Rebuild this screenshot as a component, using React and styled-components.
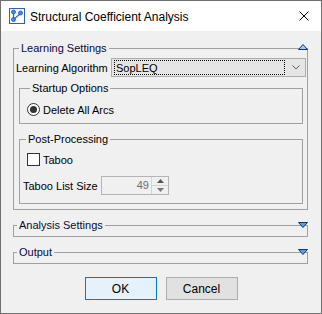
import React from "react";
import styled, { createGlobalStyle } from "styled-components";

const Global = createGlobalStyle`
  body {
    margin: 0;
    background: #ffffff;
    font-family: "Liberation Sans", Arial, sans-serif;
    font-size: 11px;
    color: #000;
  }
`;

const Window = styled.div`
  width: 322px;
  height: 314px;
  box-sizing: border-box;
  border: 1px solid #707070;
  background: #f0f0f0;
  display: flex;
  flex-direction: column;
`;

const TitleBar = styled.div`
  height: 30px;
  background: #fff;
  display: flex;
  align-items: center;
  padding-left: 8px;
  padding-right: 12px;
  gap: 5px;
  font-size: 12px;
`;

const TitleText = styled.div`
  flex: 1;
  padding-top: 1px;
`;

const Content = styled.div`
  flex: 1;
  display: flex;
  flex-direction: column;
  padding: 10px 13px 0 12px;
`;

const Group = styled.fieldset`
  position: relative;
  margin: ${(p) => p.$margin || "0"};
  padding: ${(p) => p.$pad || "0"};
  border: 1px solid #a0a0a0;
  box-sizing: border-box;
  display: flex;
  flex-direction: column;
`;

const Legend = styled.legend`
  margin-left: 3px;
  padding: 0 2px;
  line-height: 14px;
  color: ${(p) => p.$color || "#000"};
`;

const Toggle = styled.svg`
  position: absolute;
  right: -1px;
  top: ${(p) => (p.$up ? -11 : -10)}px;
`;

const Row = styled.div`
  display: flex;
  align-items: center;
  margin: ${(p) => p.$margin || "0"};
`;

const Label = styled.div`
  width: ${(p) => p.$w}px;
  flex-shrink: 0;
`;

const Combo = styled.div`
  flex: 1;
  height: 19px;
  box-sizing: border-box;
  border: 1px solid #adadad;
  background: #e5e5e5;
  display: flex;
  align-items: center;
  padding: 1px 5px 1px 2px;
  gap: 7px;
`;

const Focus = styled.div`
  flex: 1;
  height: 15px;
  box-sizing: border-box;
  border: 1px dotted #000;
  display: flex;
  align-items: center;
  padding-left: 1px;
`;

const Choice = styled.div`
  display: flex;
  align-items: center;
  gap: 3px;
  height: 13px;
  margin: ${(p) => p.$margin || "0"};
`;

const Radio = styled.div`
  width: 13px;
  height: 13px;
  box-sizing: border-box;
  border: 1px solid #333;
  border-radius: 50%;
  background: #fff;
  display: flex;
  align-items: center;
  justify-content: center;
  &::after {
    content: "";
    width: 7px;
    height: 7px;
    border-radius: 50%;
    background: #333;
  }
`;

const Check = styled.div`
  width: 13px;
  height: 13px;
  box-sizing: border-box;
  border: 1px solid #333;
  background: #fff;
`;

const Spinner = styled.div`
  width: 68px;
  height: 19px;
  box-sizing: border-box;
  border: 1px solid #b4b4b4;
  display: flex;
`;

const SpinValue = styled.div`
  flex: 1;
  color: #6d6d6d;
  text-align: right;
  padding-right: 2px;
  line-height: 17px;
`;

const SpinButtons = styled.div`
  width: 16px;
  border-left: 1px solid #d4d4d4;
  display: flex;
  flex-direction: column;
`;

const SpinButton = styled.div`
  flex: 1;
  display: flex;
  align-items: center;
  justify-content: center;
  & + & {
    border-top: 1px solid #d4d4d4;
  }
`;

const Buttons = styled.div`
  display: flex;
  justify-content: center;
  gap: 9px;
  margin-top: 13px;
  padding-left: 1px;
`;

const Button = styled.button`
  width: 72px;
  height: 23px;
  box-sizing: border-box;
  font: inherit;
  font-size: 12px;
  color: #000;
  border: 1px solid ${(p) => (p.$primary ? "#0078d7" : "#adadad")};
  background: ${(p) => (p.$primary ? "#e5f1fb" : "#e1e1e1")};
  padding: 0;
`;

function AppIcon() {
  return (
    <svg width="16" height="16" viewBox="0 0 16 16">
      <rect x="0.5" y="0.5" width="15" height="15" fill="#fff" stroke="#2a5fd8" />
      <path d="M4.5 4.5 L4.5 11.5 L11.5 5.5" fill="none" stroke="#2a5fd8" strokeWidth="1.2" />
      <circle cx="4.5" cy="4" r="2" fill="#3d8ef0" stroke="#1d4fb8" strokeWidth="0.8" />
      <circle cx="11.5" cy="5" r="2" fill="#3d8ef0" stroke="#1d4fb8" strokeWidth="0.8" />
      <circle cx="4.5" cy="11.5" r="2" fill="#3d8ef0" stroke="#1d4fb8" strokeWidth="0.8" />
    </svg>
  );
}

function CloseIcon() {
  return (
    <svg width="10" height="10" viewBox="0 0 10 10">
      <path d="M0.5 0.5 L9.5 9.5 M9.5 0.5 L0.5 9.5" stroke="#000" strokeWidth="1" />
    </svg>
  );
}

function Arrow({ up }) {
  return (
    <Toggle $up={up} width="10" height="6" viewBox="0 0 10 6">
      {up ? (
        <polygon points="5,0.5 9.5,5.5 0.5,5.5" fill="#8fd0f4" stroke="#1c2f6a" strokeWidth="1" />
      ) : (
        <polygon points="0.5,0.5 9.5,0.5 5,5.5" fill="#4aa8e4" stroke="#1c2f6a" strokeWidth="1" />
      )}
    </Toggle>
  );
}

function Chevron() {
  return (
    <svg width="8" height="5" viewBox="0 0 8 5">
      <path d="M0.5 0.5 L4 4 L7.5 0.5" fill="none" stroke="#606060" strokeWidth="1" />
    </svg>
  );
}

function SpinArrow({ up }) {
  return (
    <svg width="7" height="4" viewBox="0 0 7 4">
      <polygon points={up ? "3.5,0 7,4 0,4" : "0,0 7,0 3.5,4"} fill={up ? "#555" : "#777"} />
    </svg>
  );
}

export default function App() {
  return (
    <>
      <Global />
      <Window>
        <TitleBar>
          <AppIcon />
          <TitleText>Structural Coefficient Analysis</TitleText>
          <CloseIcon />
        </TitleBar>
        <Content>
          <Group $pad="0 1px 5px 2px">
            <Legend $color="#0a0a3c">Learning Settings</Legend>
            <Arrow up />
            <Row $margin="3px 0 0 0">
              <Label $w={95}>Learning Algorithm</Label>
              <Combo>
                <Focus>SopLEQ</Focus>
                <Chevron />
              </Combo>
            </Row>
            <Group $margin="4px 3px 0 3px" $pad="0 0 7px 7px">
              <Legend>Startup Options</Legend>
              <Choice $margin="8px 0 0 0">
                <Radio />
                Delete All Arcs
              </Choice>
            </Group>
            <Group $margin="8px 3px 0 3px" $pad="0 0 8px 3px">
              <Legend>Post-Processing</Legend>
              <Choice $margin="7px 0 0 4px">
                <Check />
                Taboo
              </Choice>
              <Row $margin="10px 0 0 0">
                <Label $w={78}>Taboo List Size</Label>
                <Spinner>
                  <SpinValue>49</SpinValue>
                  <SpinButtons>
                    <SpinButton>
                      <SpinArrow up />
                    </SpinButton>
                    <SpinButton>
                      <SpinArrow />
                    </SpinButton>
                  </SpinButtons>
                </Spinner>
              </Row>
            </Group>
          </Group>
          <Group $margin="8px 0 0 0" $pad="0 0 4px 0">
            <Legend $color="#0a0a3c">Analysis Settings</Legend>
            <Arrow />
          </Group>
          <Group $margin="8px 0 0 0" $pad="0 0 4px 0">
            <Legend $color="#0a0a3c">Output</Legend>
            <Arrow />
          </Group>
          <Buttons>
            <Button $primary>OK</Button>
            <Button>Cancel</Button>
          </Buttons>
        </Content>
      </Window>
    </>
  );
}
